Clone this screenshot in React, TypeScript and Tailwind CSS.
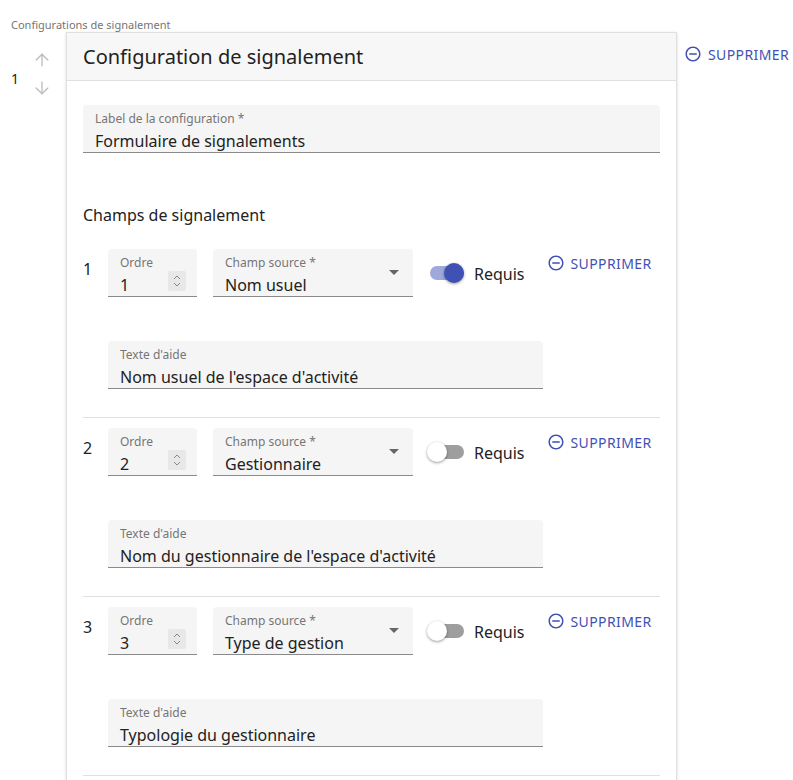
import { ArrowUp, ArrowDown } from 'lucide-react';

const rows = [
  { n: 1, source: 'Nom usuel', on: true, help: "Nom usuel de l'espace d'activité" },
  { n: 2, source: 'Gestionnaire', on: false, help: "Nom du gestionnaire de l'espace d'activité" },
  { n: 3, source: 'Type de gestion', on: false, help: 'Typologie du gestionnaire' },
];

function MinusCircle() {
  return (
    <svg width="18" height="18" viewBox="0 0 24 24" className="fill-[#3f51b5]">
      <path d="M7 11v2h10v-2H7zm5-9C6.48 2 2 6.48 2 12s4.48 10 10 10 10-4.48 10-10S17.52 2 12 2zm0 18c-4.41 0-8-3.59-8-8s3.59-8 8-8 8 3.59 8 8-3.59 8-8 8z" />
    </svg>
  );
}

function Delete() {
  return (
    <div className="flex items-center gap-[6px] text-[14px] text-[#3f51b5] tracking-[0.4px] h-[22px]">
      <MinusCircle />
      <span>SUPPRIMER</span>
    </div>
  );
}

function Field({ label, value, className, children }: { label: string; value: string; className: string; children?: React.ReactNode }) {
  return (
    <div className={`relative bg-[#f5f5f5] rounded-t-[4px] border-b border-[#8a8a8a] h-[48px] px-[12px] pt-[7px] ${className}`}>
      <div className="text-[12px] leading-[14px] text-[#757575]">{label}</div>
      <div className="text-[16px] leading-[22px] text-[#222] mt-[4px]">{value}</div>
      {children}
    </div>
  );
}

export default function App() {
  return (
    <div className="w-[793px] h-[780px] overflow-hidden bg-white font-['Roboto',sans-serif] relative">
      <div className="text-[11px] text-[#757575] pl-[11px] pt-[18px] leading-[13px]">Configurations de signalement</div>
      <div className="flex mt-[1px]">
        <div className="w-[66px] flex items-start pt-[18px]">
          <span className="w-[32px] pl-[11px] mt-[18px] text-[14px] text-[#222]">1</span>
          <div className="flex flex-col gap-[8px] text-[#bdbdbd]">
            <ArrowUp size={20} strokeWidth={1.6} />
            <ArrowDown size={20} strokeWidth={1.6} />
          </div>
        </div>
        <div className="w-[611px] border border-[#e0e0e0] shadow-[0_1px_3px_rgba(0,0,0,0.15)] h-[760px]">
          <div className="h-[48px] bg-[#f7f7f7] border-b border-[#e0e0e0] flex items-center pl-[16px] text-[20px] text-[#222]">
            Configuration de signalement
          </div>
          <div className="px-[16px] pt-[24px]">
            <Field label="Label de la configuration *" value="Formulaire de signalements" className="w-[577px]" />
            <div className="mt-[50px] text-[16px] text-[#222] h-[24px]">Champs de signalement</div>
            <div className="mt-[22px]">
              {rows.map((r, i) => (
                <div key={r.n} className={`${i > 0 ? 'pt-[10px]' : ''} pb-[28px] border-b border-[#e0e0e0]`}>
                  <div className="flex items-start">
                    <span className="w-[25px] pt-[8px] text-[16px] text-[#222]">{r.n}</span>
                    <Field label="Ordre" value={String(r.n)} className="w-[89px]">
                      <div className="absolute right-[11px] top-[22px] w-[18px] h-[20px] bg-[#e8e8e8] rounded-[2px] flex flex-col items-center justify-center text-[#888] text-[7px] leading-[7px]">
                        <svg width="8" height="14" viewBox="0 0 8 14" fill="none" stroke="#888" strokeWidth="1"><path d="M1 5l3-3 3 3M1 9l3 3 3-3" /></svg>
                      </div>
                    </Field>
                    <Field label="Champ source *" value={r.source} className="w-[200px] ml-[16px]">
                      <div className="absolute right-[14px] top-[21px] w-0 h-0 border-l-[5px] border-r-[5px] border-t-[5px] border-l-transparent border-r-transparent border-t-[#666]" />
                    </Field>
                    <div className="ml-[14px] mt-[12px] relative w-[40px] h-[24px] flex items-center">
                      <div className={`w-[34px] h-[14px] rounded-full ml-[3px] ${r.on ? 'bg-[#9fa8da]' : 'bg-[#9e9e9e]'}`} />
                      <div className={`absolute top-[2px] w-[20px] h-[20px] rounded-full shadow-[0_1px_3px_rgba(0,0,0,0.4)] ${r.on ? 'left-[17px] bg-[#3f51b5]' : 'left-0 bg-white'}`} />
                    </div>
                    <span className="ml-[7px] mt-[13px] text-[16px] text-[#222]">Requis</span>
                    <div className="ml-[22px] mt-[3px]"><Delete /></div>
                  </div>
                  <Field label="Texte d'aide" value={r.help} className="w-[435px] ml-[25px] mt-[44px] h-[47px]" />
                </div>
              ))}
            </div>
          </div>
        </div>
        <div className="ml-[7px] mt-[11px]"><Delete /></div>
      </div>
    </div>
  );
}
